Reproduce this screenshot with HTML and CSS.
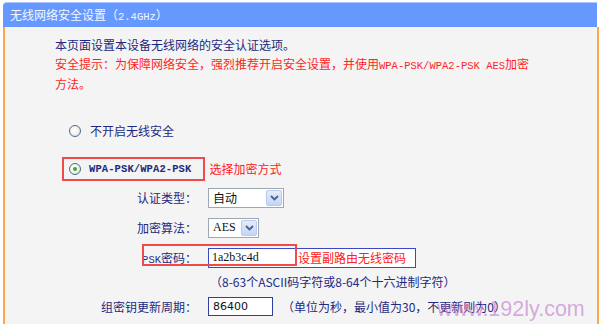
FILE: index.html
```html
<!DOCTYPE html>
<html lang="zh-CN">
<head>
<meta charset="utf-8">
<title>无线网络安全设置</title>
<link rel="stylesheet" href="styles.css">
</head>
<body>
<div class="page">
  <div class="hd">无线网络安全设置（<span class="lat">2.4GHz</span>）</div>
  <div class="bd">
    <div class="intro">
      <div>本页面设置本设备无线网络的安全认证选项。</div>
      <div class="warn">安全提示：为保障网络安全，强烈推荐开启安全设置，并使用<span class="lat">WPA-PSK/WPA2-PSK AES</span>加密</div>
      <div class="warn">方法。</div>
    </div>

    <div class="opt opt-off">
      <span class="radio"></span>
      <span>不开启无线安全</span>
    </div>

    <div class="opt-line">
      <div class="opt opt-on">
        <span class="radio checked"></span>
        <span class="lat lat-b">WPA-PSK/WPA2-PSK</span>
      </div>
      <span class="note">选择加密方式</span>
    </div>

    <div class="row row-auth">
      <span class="lbl">认证类型：</span>
      <span class="sel sel-auth">
        <span class="sel-val">自动</span>
        <span class="sel-btn"><svg width="9" height="6" viewBox="0 0 9 6"><path d="M1 1 L4.5 4.5 L8 1" fill="none" stroke="#4d6185" stroke-width="1.8"/></svg></span>
      </span>
    </div>

    <div class="row row-alg">
      <span class="lbl">加密算法：</span>
      <span class="sel sel-alg">
        <span class="sel-val lat-s">AES</span>
        <span class="sel-btn"><svg width="9" height="6" viewBox="0 0 9 6"><path d="M1 1 L4.5 4.5 L8 1" fill="none" stroke="#4d6185" stroke-width="1.8"/></svg></span>
      </span>
    </div>

    <div class="row row-psk">
      <span class="lbl"><span class="lat">PSK</span>密码：</span>
      <span class="pskbox">
        <span class="psk-val lat-s">1a2b3c4d</span>
        <span class="note">设置副路由无线密码</span>
      </span>
      <span class="mark"></span>
    </div>

    <div class="hint">（8-63个ASCII码字符或8-64个十六进制字符）</div>

    <div class="row row-gk">
      <span class="lbl">组密钥更新周期：</span>
      <span class="inp">86400</span>
      <span class="gk-note">（单位为秒，最小值为30，不更新则为0）</span>
    </div>

    <div class="wm">www.192ly.com</div>
  </div>
</div>
</body>
</html>
```

FILE: styles.css
```css
html, body {
  margin: 0;
  padding: 0;
  background: #ffffff;
}

body {
  font-family: "Noto Sans CJK SC", "Noto Sans", sans-serif;
  font-size: 12px;
  color: #1d2a80;
  width: 600px;
  height: 324px;
  overflow: hidden;
}

.page {
  margin: 2px 0 0 3px;
  width: 596px;
}

.hd {
  width: 594px;
  height: 25px;
  box-sizing: border-box;
  background: #6699ff;
  border-top: 1px solid #a9c4ff;
  border-radius: 4px 0 0 0;
  color: #f4f6ff;
  line-height: 23px;
  padding-left: 7px;
}

.bd {
  position: relative;
  height: 297px;
  box-sizing: border-box;
  background: #f4f4f4;
  border-left: 2px solid #ffa64d;
  border-right: 2px solid #ffa64d;
  padding-top: 9px;
}

.lat {
  font-family: "Liberation Mono", monospace;
  font-size: 10.5px;
}

.lat-b {
  font-weight: bold;
  letter-spacing: 0.1px;
}

.lat-s {
  font-family: "Liberation Serif", serif;
  font-size: 12px;
}

.intro {
  margin-left: 50px;
  line-height: 18.5px;
}

.warn {
  color: #ff1f1f;
}

.opt {
  display: flex;
  align-items: center;
  height: 18px;
}

.opt-off {
  margin-top: 28px;
  margin-left: 64px;
  gap: 9px;
}

.opt-line {
  display: flex;
  align-items: center;
  margin-top: 17px;
  margin-left: 57px;
}

.opt-on {
  height: 20px;
  border: 2px solid #f24a4a;
  padding: 0 12px 0 5px;
  gap: 8px;
}

.radio {
  width: 12px;
  height: 12px;
  box-sizing: border-box;
  border-radius: 50%;
  border: 1px solid #4a6a8a;
  background: radial-gradient(circle at 40% 40%, #ffffff 0%, #f2f2ee 50%, #d6d6cf 100%);
  position: relative;
  flex: none;
}

.radio.checked::after {
  content: "";
  position: absolute;
  left: 3px;
  top: 3px;
  width: 4px;
  height: 4px;
  border-radius: 50%;
  background: #2fae2f;
}

.note {
  color: #ff2020;
  margin-left: 4px;
}

.row {
  display: flex;
  align-items: center;
  position: relative;
}

.lbl {
  width: 192px;
  flex: none;
  text-align: right;
  margin-right: 11px;
}

.row-auth {
  margin-top: 7px;
}

.row-alg {
  margin-top: 10px;
}

.sel {
  display: flex;
  align-items: center;
  justify-content: space-between;
  height: 20px;
  box-sizing: border-box;
  border: 1px solid #9fa8b0;
  background: #ffffff;
  padding-right: 1px;
}

.sel-auth {
  width: 76px;
}

.sel-alg {
  width: 51px;
}

.sel-val {
  padding-left: 4px;
  color: #111111;
}

.sel-btn {
  width: 16px;
  height: 16px;
  box-sizing: border-box;
  border: 1px solid #b8cbef;
  border-radius: 2px;
  background: linear-gradient(#e3ecfd, #c3d5f7);
  display: flex;
  align-items: center;
  justify-content: center;
}

.row-psk {
  margin-top: 10px;
}

.pskbox {
  display: flex;
  align-items: center;
  width: 208px;
  height: 20px;
  box-sizing: border-box;
  border: 1px solid #3a47c6;
  background: #ffffff;
}

.psk-val {
  width: 86px;
  padding-left: 3px;
  color: #111111;
}

.pskbox .note {
  margin-left: 0;
}

.mark {
  position: absolute;
  left: 137px;
  top: -4px;
  width: 155px;
  height: 22px;
  box-sizing: border-box;
  border: 2px solid #f24a4a;
}

.hint {
  margin-top: 6px;
  margin-left: 205px;
  line-height: 16px;
}

.row-gk {
  margin-top: 7px;
}

.inp {
  width: 65px;
  height: 19px;
  box-sizing: border-box;
  border: 1px solid #2f3f9f;
  background: #ffffff;
  padding-left: 4px;
  line-height: 17px;
  color: #111111;
  font-family: "DejaVu Sans", sans-serif;
  font-size: 11px;
}

.gk-note {
  margin-left: 9px;
}

.wm {
  position: absolute;
  left: 432px;
  top: 270px;
  font-family: "Liberation Sans", Arial, sans-serif;
  font-size: 21.5px;
  line-height: 24px;
  color: rgba(196, 118, 206, 0.62);
  white-space: nowrap;
}
```
